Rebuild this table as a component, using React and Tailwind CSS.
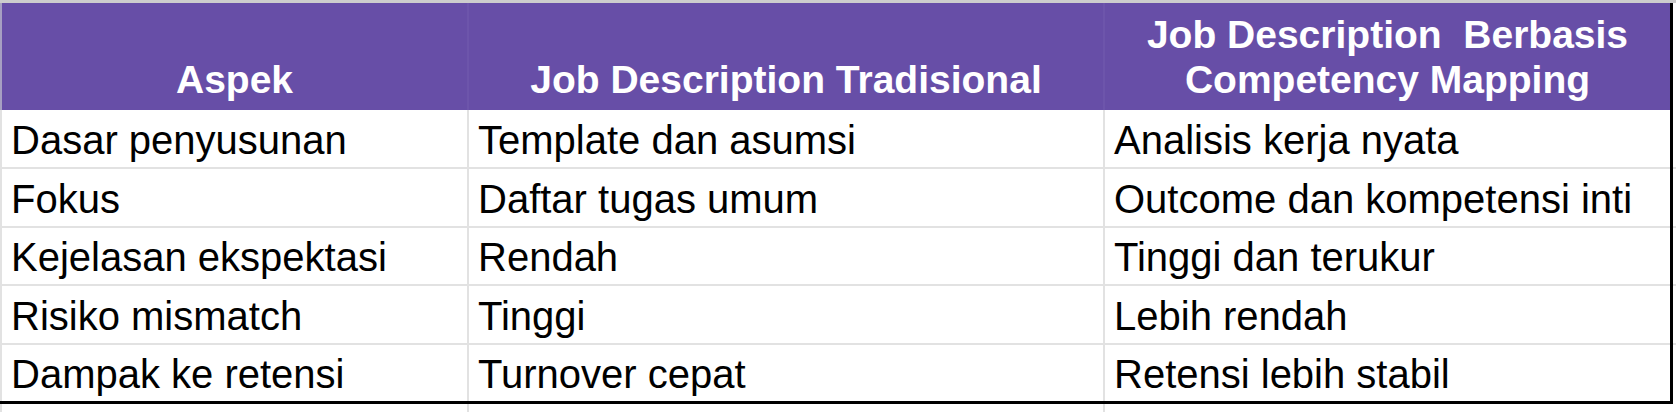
import React from 'react';

const rows = [
  ['Dasar penyusunan', 'Template dan asumsi', 'Analisis kerja nyata', 'h-[59px]'],
  ['Fokus', 'Daftar tugas umum', 'Outcome dan kompetensi inti', 'h-[59px]'],
  ['Kejelasan ekspektasi', 'Rendah', 'Tinggi dan terukur', 'h-[58px]'],
  ['Risiko mismatch', 'Tinggi', 'Lebih rendah', 'h-[59px]'],
  ['Dampak ke retensi', 'Turnover cepat', 'Retensi lebih stabil', 'h-[56px]'],
];

export default function App() {
  return (
    <div className="w-[1676px] h-[412px] overflow-hidden bg-white font-['Liberation_Sans',Arial,sans-serif] text-black">
      {/* top gridline strip */}
      <div className="h-[3px] bg-[#cdcdcd]" />

      <div className="flex">
        {/* Table with selection border */}
        <div className="w-[1673px] border-r-[3px] border-b-[3px] border-black">
          {/* Header */}
          <div className="grid grid-cols-[467px_636px_567px] h-[107px] bg-[#674ea7] text-white font-bold text-[39px] leading-[45px]">
            <div className="flex items-end justify-center pb-[8px] border-l-2 border-[#a79fc2]">Aspek</div>
            <div className="flex items-end justify-center pb-[8px] border-l-2 border-[#6d55ab]">Job Description Tradisional</div>
            <div className="flex items-end justify-center text-center pb-[8px] border-l-2 border-[#6d55ab]">
              <span>
                Job Description{'\u00a0'} Berbasis
                <br />
                Competency Mapping
              </span>
            </div>
          </div>

          {/* Body rows */}
          {rows.map((row, i) => (
            <div
              key={row[0]}
              className={`grid grid-cols-[467px_636px_567px] text-[40px] leading-[46px] ${row[3]} ${i < rows.length - 1 ? 'border-b-2 border-[#e2e2e2]' : ''}`}
            >
              <div className="flex items-end pl-[9px] pb-[4px] border-l-2 border-[#e2e2e2] whitespace-nowrap">{row[0]}</div>
              <div className="flex items-end pl-[9px] pb-[4px] border-l-2 border-[#e2e2e2] whitespace-nowrap">{row[1]}</div>
              <div className="flex items-end pl-[9px] pb-[4px] border-l-2 border-[#e2e2e2] whitespace-nowrap">{row[2]}</div>
            </div>
          ))}
        </div>

        {/* right-side gridline stubs */}
        <div className="flex-1 flex flex-col pt-[107px]">
          <div className="h-[59px] border-b-2 border-[#e2e2e2]" />
          <div className="h-[59px] border-b-2 border-[#e2e2e2]" />
          <div className="h-[58px] border-b-2 border-[#e2e2e2]" />
          <div className="h-[59px] border-b-2 border-[#e2e2e2]" />
        </div>
      </div>

      {/* area below selection */}
      <div className="grid grid-cols-[467px_636px_567px] h-[8px]">
        <div className="border-l-2 border-[#e2e2e2]" />
        <div className="border-l-2 border-[#e2e2e2]" />
        <div className="border-l-2 border-[#e2e2e2]" />
      </div>
    </div>
  );
}
